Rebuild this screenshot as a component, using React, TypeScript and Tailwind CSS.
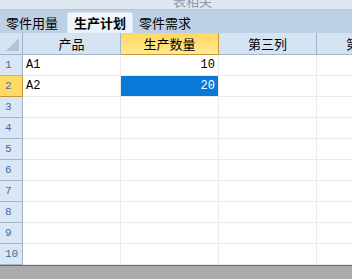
import React from 'react';

const cols = ['产品', '生产数量', '第三列', '第四列'];
const data: Record<number, [string, string]> = {
  1: ['A1', '10'],
  2: ['A2', '20'],
};

const cjk = { fontFamily: '"Noto Sans CJK SC", "Noto Sans", sans-serif' };
const cell = { fontFamily: '"Liberation Mono", "Noto Sans CJK SC", monospace' };

const App: React.FC = () => {
  const rows = Array.from({ length: 10 }, (_, i) => i + 1);
  return (
    <div className="w-[352px] h-[279px] overflow-hidden bg-[#ababab] flex flex-col" style={cjk}>
      <div className="h-[10px] shrink-0 overflow-hidden bg-[#dfe7f1] border-b border-[#b6c7dc] pl-[173px]">
        <div className="text-[13px] leading-[13px] -mt-[6px] text-[#8d9bb0]">表相关</div>
      </div>
      <div className="h-[23px] shrink-0 bg-[#bdd0e6] flex items-end pl-[2px] text-[13px] text-black">
        <div className="h-[21px] px-[4px] flex items-center">零件用量</div>
        <div className="h-[21px] ml-[5px] px-[6px] flex items-center font-bold rounded-t-[3px] bg-gradient-to-b from-[#f3f8fd] to-[#e9f1fb] border-t border-x border-[#dbe6f3]">生产计划</div>
        <div className="h-[21px] px-[6px] flex items-center">零件需求</div>
      </div>
      <div className="flex shrink-0 h-[22px] text-[13px] text-black">
        <div className="w-[23px] shrink-0 bg-[#d6e3f2] border-r border-b border-[#9fb5cc] relative">
          <svg className="absolute right-[3px] bottom-[3px]" width="13" height="13" viewBox="0 0 13 13">
            <polygon points="13,0 13,13 0,13" fill="#b3c3d6" />
          </svg>
        </div>
        {cols.map((c, i) =>
          i === 1 ? (
            <div key={c} className="w-[98px] shrink-0 flex items-center justify-center bg-gradient-to-b from-[#ffd75e] to-[#ffe98f] border-r border-b border-[#c8963a]">{c}</div>
          ) : (
            <div key={c} className="w-[98px] shrink-0 flex items-center justify-center bg-[#d6e3f2] border-r border-b border-[#9fb5cc] whitespace-nowrap">{c}</div>
          )
        )}
      </div>
      {rows.map((r) => (
        <div key={r} className="flex shrink-0 h-[21px] text-[12px] bg-white">
          <div
            className={
              r === 2
                ? 'w-[23px] shrink-0 bg-[#ffd966] border-r border-b border-[#c8963a] text-[#3d6fa6] text-[11px] pl-[5px] flex items-center'
                : 'w-[23px] shrink-0 bg-[#dae6f3] border-r border-b border-[#9fb5cc] text-[#3d6fa6] text-[11px] pl-[5px] flex items-center'
            }
            style={cell}
          >
            {r}
          </div>
          <div className="w-[98px] shrink-0 border-r border-b border-[#ebebeb] flex items-center pl-[3px] text-black" style={cell}>
            {data[r]?.[0] ?? ''}
          </div>
          <div
            className={
              r === 2
                ? 'w-[98px] shrink-0 bg-[#0a78d7] text-white border-r border-b border-[#ebebeb] flex items-center justify-end pr-[3px]'
                : 'w-[98px] shrink-0 text-black border-r border-b border-[#ebebeb] flex items-center justify-end pr-[3px]'
            }
            style={cell}
          >
            {data[r]?.[1] ?? ''}
          </div>
          <div className="w-[98px] shrink-0 border-r border-b border-[#ebebeb]" />
          <div className="w-[98px] shrink-0 border-r border-b border-[#ebebeb]" />
        </div>
      ))}
      <div className="h-px shrink-0 bg-[#6b6b6b]" />
    </div>
  );
};

export default App;
